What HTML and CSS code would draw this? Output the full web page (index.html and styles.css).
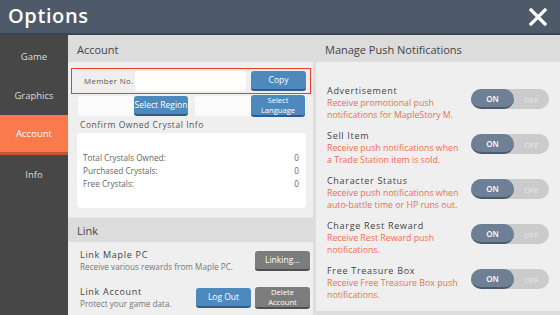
FILE: index.html
```html
<!DOCTYPE html>
<html lang="en">
<head>
  <meta charset="UTF-8" />
  <title>Options</title>
  <link rel="stylesheet" href="styles.css">
</head>
<body>

  <!-- top bar -->
  <header class="topbar">
    <div class="title">Options</div>
    <svg class="close" width="18" height="18" viewBox="0 0 18 18">
      <path d="M2 2 L16 16 M16 2 L2 16" stroke="#fff" stroke-width="3.2" stroke-linecap="square" fill="none"/>
    </svg>
  </header>

  <div class="frame">
    <!-- side menu -->
    <aside class="sidebar">
      <div class="tab">Game</div>
      <div class="tab">Graphics</div>
      <div class="tab active">Account</div>
      <div class="tab">Info</div>
    </aside>

    <main class="content">
      <!-- left column -->
      <section class="col left">
        <div class="col-head">Account</div>

        <div class="member-row">
          <span class="member-label">Member No.</span>
          <div class="member-field"></div>
          <button class="btn blue copy">Copy</button>
        </div>

        <div class="select-row">
          <div class="select-group">
            <div class="select-box"></div>
            <button class="btn blue small">Select Region</button>
          </div>
          <div class="select-group">
            <div class="select-box"></div>
            <button class="btn blue small two"><span>Select</span><span>Language</span></button>
          </div>
        </div>

        <div class="sub-title">Confirm Owned Crystal Info</div>
        <div class="crystal-card">
          <div class="crystal-line"><span>Total Crystals Owned:</span><span>0</span></div>
          <div class="crystal-line"><span>Purchased Crystals:</span><span>0</span></div>
          <div class="crystal-line"><span>Free Crystals:</span><span>0</span></div>
        </div>

        <div class="col-head link-head">Link</div>

        <div class="link-row">
          <div class="link-text">
            <div class="item-title">Link Maple PC</div>
            <div class="link-desc">Receive various rewards from Maple PC.</div>
          </div>
          <div class="link-btns">
            <button class="btn gray">Linking...</button>
          </div>
        </div>

        <div class="link-row">
          <div class="link-text">
            <div class="item-title">Link Account</div>
            <div class="link-desc">Protect your game data.</div>
          </div>
          <div class="link-btns">
            <button class="btn blue">Log Out</button>
            <button class="btn gray two"><span>Delete</span><span>Account</span></button>
          </div>
        </div>
      </section>

      <!-- right column -->
      <section class="col right">
        <div class="col-head">Manage Push Notifications</div>

        <div class="push-list">
          <div class="push-row">
            <div class="push-text">
              <div class="item-title">Advertisement</div>
              <div class="push-desc">Receive promotional push notifications for MapleStory M.</div>
            </div>
            <div class="toggle"><span class="on">ON</span><span class="off">OFF</span></div>
          </div>
          <div class="push-row">
            <div class="push-text">
              <div class="item-title">Sell Item</div>
              <div class="push-desc">Receive push notifications when a Trade Station item is sold.</div>
            </div>
            <div class="toggle"><span class="on">ON</span><span class="off">OFF</span></div>
          </div>
          <div class="push-row">
            <div class="push-text">
              <div class="item-title">Character Status</div>
              <div class="push-desc">Receive push notifications when auto-battle time or HP runs out.</div>
            </div>
            <div class="toggle"><span class="on">ON</span><span class="off">OFF</span></div>
          </div>
          <div class="push-row">
            <div class="push-text">
              <div class="item-title">Charge Rest Reward</div>
              <div class="push-desc">Receive Rest Reward push notifications.</div>
            </div>
            <div class="toggle"><span class="on">ON</span><span class="off">OFF</span></div>
          </div>
          <div class="push-row">
            <div class="push-text">
              <div class="item-title">Free Treasure Box</div>
              <div class="push-desc">Receive Free Treasure Box push notifications.</div>
            </div>
            <div class="toggle"><span class="on">ON</span><span class="off">OFF</span></div>
          </div>
        </div>
      </section>
    </main>
  </div>

</body>
</html>
```

FILE: styles.css
```css
* {
  margin: 0;
  padding: 0;
  box-sizing: border-box;
}

body {
  width: 560px;
  height: 315px;
  overflow: hidden;
  font-family: "Open Sans", "Noto Sans", sans-serif;
  background: #474747;
  color: #444;
}

/* top bar */
.topbar {
  height: 35px;
  background: #4e5a69;
  border-bottom: 2px solid #3a434f;
  display: flex;
  align-items: center;
  justify-content: space-between;
  padding: 0 13px 0 8px;
}

.title {
  color: #fff;
  font-size: 20px;
  font-weight: 600;
  letter-spacing: 0.6px;
  line-height: 1;
  margin-top: -2px;
}

.close {
  display: block;
}

.frame {
  display: flex;
  height: 280px;
}

/* side menu */
.sidebar {
  width: 68px;
  background: #474747;
  padding-top: 2px;
}

.tab {
  height: 39px;
  display: flex;
  align-items: center;
  justify-content: center;
  color: #dcdcdc;
  font-size: 9.5px;
}

.tab.active {
  height: 40px;
  background: #fa7a4e;
  border-bottom: 3px solid #c4553a;
  color: #fff;
}

/* content */
.content {
  flex: 1;
  display: flex;
  gap: 3px;
  background: #dedede;
  padding-top: 2px;
}

.col {
  background: #efefef;
  display: flex;
  flex-direction: column;
}

.col.left {
  width: 245px;
}

.col.right {
  flex: 1;
  border-bottom: 2px solid #dcdcdc;
  margin-bottom: 2px;
}

.col-head {
  height: 25px;
  background: #dcdcdc;
  font-size: 11px;
  color: #444;
  display: flex;
  align-items: center;
  padding-left: 9px;
}

.member-row {
  margin: 6px 2px 0 3px;
  height: 26px;
  border: 1.5px solid #ef3b2b;
  display: flex;
  align-items: center;
  padding-left: 12px;
}

.member-label {
  flex: none;
  font-size: 7.8px;
  letter-spacing: 0.4px;
  color: #555;
  width: 51px;
  white-space: nowrap;
}

.member-field {
  width: 111px;
  height: 20px;
  background: #fff;
  border-radius: 3px;
}

.btn {
  border: none;
  border-radius: 3px;
  color: #fff;
  font-family: inherit;
  font-size: 8.5px;
  line-height: 1.05;
  height: 20px;
  width: 55px;
  cursor: pointer;
}

.btn.blue {
  background: #4d89bd;
  border-bottom: 2px solid #2f5f88;
}

.btn.gray {
  background: #7c7c7c;
  border-bottom: 2px solid #505050;
}

.btn.two {
  display: flex;
  flex-direction: column;
  align-items: center;
  justify-content: center;
  height: 22px;
  font-size: 7.6px;
  line-height: 10.4px;
}

.copy {
  margin-left: 5px;
}

.select-row {
  display: flex;
  gap: 7px;
  padding: 1px 0 0 10px;
}

.select-group {
  display: flex;
  align-items: center;
}

.select-box {
  width: 57px;
  height: 20px;
  background: #fbfbfb;
  border-radius: 3px;
  margin-right: -1px;
}

.btn.small {
  width: 54px;
}

.sub-title {
  font-size: 8.5px;
  letter-spacing: 0.55px;
  color: #555;
  padding: 2px 0 0 12px;
  height: 16px;
}

.crystal-card {
  margin: 0 7px 0 9px;
  height: 75px;
  background: #fff;
  border-radius: 4px;
  padding: 18px 7px 0 6px;
}

.crystal-line {
  display: flex;
  justify-content: space-between;
  font-size: 8.2px;
  color: #666;
  height: 13px;
  line-height: 13px;
}

.link-head {
  margin-top: 9px;
  border-top: 1px solid #e6e6e6;
}

.link-row {
  display: flex;
  align-items: center;
  justify-content: space-between;
  padding: 0 3px 0 12px;
  height: 34px;
  margin-top: 2px;
}

.link-row + .link-row {
  margin-top: 3px;
}

.item-title {
  font-size: 9px;
  letter-spacing: 0.7px;
  color: #444;
  line-height: 12px;
}

.link-desc {
  font-size: 8.2px;
  color: #777;
  line-height: 12px;
}

.link-btns {
  display: flex;
  align-items: center;
  gap: 4px;
}

/* push notifications */
.push-list {
  padding: 23px 11px 0 11px;
  display: flex;
  flex-direction: column;
}

.push-row {
  height: 45px;
  display: flex;
  justify-content: space-between;
}

.push-text {
  width: 135px;
}

.push-desc {
  font-size: 8.8px;
  color: #f4704c;
  line-height: 11.5px;
  margin-top: 1px;
}

.toggle {
  width: 78px;
  height: 20px;
  border-radius: 10px;
  background: #cbcbcb;
  display: flex;
  margin-top: 4px;
  font-size: 8px;
}

.toggle span {
  display: flex;
  align-items: center;
  justify-content: center;
}

.toggle .on {
  width: 43px;
  background: #6e8096;
  border-bottom: 2px solid #4d5a69;
  border-radius: 10px;
  color: #fff;
  font-weight: 600;
}

.toggle .off {
  flex: 1;
  color: #e9e9e9;
}
```
